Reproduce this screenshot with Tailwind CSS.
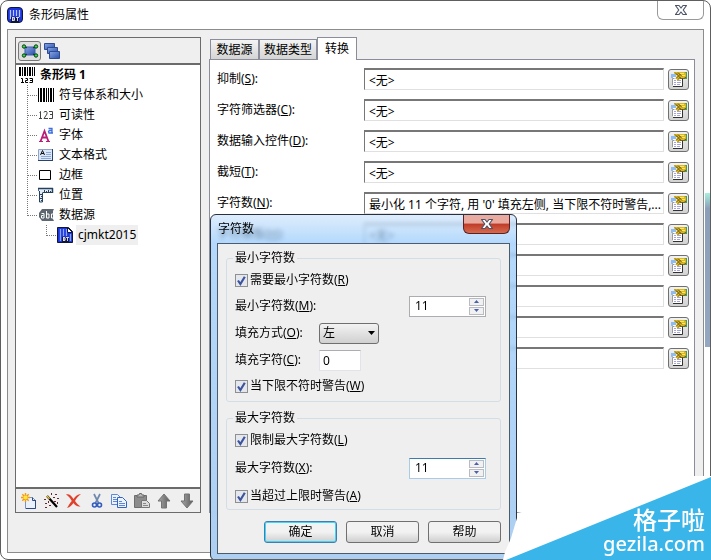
<!DOCTYPE html>
<html lang="zh-CN">
  <head>
    <meta charset="UTF-8" />
    <meta name="viewport" content="width=device-width, initial-scale=1.0" />
    <title>条形码属性</title>
    <script src="https://cdn.jsdelivr.net/npm/@tailwindcss/browser@4"></script>
  </head>
  <body class="bg-white text-black text-xs font-['Noto_Sans','Noto_Sans_CJK_SC',sans-serif]">
    <!-- Shared icons -->
    <svg class="absolute size-0" aria-hidden="true">
      <defs>
        <linearGradient id="blue" x1="0" y1="0" x2="1" y2="1">
          <stop offset="0" stop-color="#86a6e6" />
          <stop offset="1" stop-color="#2c4fa8" />
        </linearGradient>
        <linearGradient id="grey" x1="0" y1="0" x2="1" y2="0">
          <stop offset="0" stop-color="#a8a8a8" />
          <stop offset="1" stop-color="#5c5c5c" />
        </linearGradient>
      </defs>
      <symbol id="branch" viewBox="0 0 11 20">
        <path d="M.5 0V20M1 10.5H11" stroke="#777" stroke-dasharray="1 1" fill="none" />
      </symbol>
      <symbol id="branch-end" viewBox="0 0 11 20">
        <path d="M.5 0V11M1 10.5H11" stroke="#777" stroke-dasharray="1 1" fill="none" />
      </symbol>
      <symbol id="props" viewBox="0 0 16 16">
        <path d="M0 3h5v4H0z" fill="#8ebcf0" />
        <path d="M2 6h9v9H2z" fill="#fff" />
        <path d="M1.500 14V7.500h2" stroke="#999" fill="none" />
        <path d="M11.500 7v8.500H2" stroke="#333" fill="none" />
        <path d="M3 9.500h2M6 9.500h4M3 11.500h2M6 11.500h4M3 13.500h2M6 13.500h3" stroke="#a3a4d8" />
        <path d="M13 1h3v7h-3z" fill="#4c9a48" />
        <path d="M3 1h10l2 1v4l-2 1.500H9.500L7 9.500 4.500 7l2-2.500L3 2.500z" fill="#dcb824" />
        <path d="M4 1.500l6 6M7 1.500l4 4M10 2.500l-5 5M7 2.500L5.500 4M9.500 6L7 8.500M9 7.500h4l2-1.500" stroke="#5d4c12" stroke-width=".8" fill="none" />
        <path d="M9 2.500h4M11 4.500h3" stroke="#f8e868" />
      </symbol>
      <symbol id="tick" viewBox="0 0 13 13">
        <path d="M3 6.500L5.400 10 9.800 2.800" stroke="#3d539c" stroke-width="2.200" fill="none" />
      </symbol>
      <symbol id="cross" viewBox="0 0 14 12">
        <path d="M1.500 1.500h3.500L7 4l2-2.500h3.500L9.200 6l3.300 4.500H9L7 8l-2 2.500H1.500L4.800 6z" fill="#fff" stroke="#4c5468" stroke-width="1.200" stroke-linejoin="round" />
      </symbol>
      <symbol id="up" viewBox="0 0 7 4"><path d="M3.500 0L7 4H0z" fill="#4a5fae" /></symbol>
      <symbol id="down" viewBox="0 0 7 4"><path d="M0 0h7L3.500 4z" fill="#4a5fae" /></symbol>
    </svg>

    <div class="relative flex min-h-screen flex-col overflow-hidden rounded-lg border border-[#5e5e5e] px-1.5 pb-1.5">
      <!-- Title bar -->
      <header class="flex h-7 items-start">
        <h1 class="flex flex-1 items-center gap-1.5 pt-1.5">
          <svg class="size-4" viewBox="0 0 16 16">
            <rect x=".5" y=".5" width="15" height="15" rx="3.500" fill="#1c35dc" stroke="#10153c" />
            <path d="M3.500 3v9M6.500 3v6M9.500 3v6M12.500 3v7" stroke="#b9c9ff" stroke-width="1.300" />
            <path d="M4 10h8v5H4z" fill="#10153c" />
            <path d="M5.500 10v4M5.500 10.500h2v3h-2M5.500 12h2M9 10.500h3M10.500 10.500V14" stroke="#fff" stroke-width=".8" fill="none" />
          </svg>
          条形码属性
        </h1>
        <button aria-label="关闭" class="flex h-[19px] w-[47px] items-center justify-center rounded-b-md border border-t-0 border-[#999] bg-white">
          <svg class="h-3 w-3.5"><use href="#cross" /></svg>
        </button>
      </header>

      <main class="flex flex-1 gap-[7px] border border-[#8c8c8c] bg-[#efefef] pt-[7px] pr-2 pb-[39px] pl-[7px]">
        <!-- Object tree -->
        <aside class="flex w-[186px] shrink-0 flex-col border border-[#6b6b6b]">
          <div class="flex h-[27px] items-center gap-[3px] border-b-2 border-[#6b6b6b] px-0.5">
            <button aria-label="对象" class="flex h-5 w-[23px] items-center justify-center rounded-[3px] border border-[#777] bg-[#dedede]">
              <svg class="h-3.5 w-[18px]" viewBox="0 0 18 14">
                <path d="M4 3h10v8H4z" fill="url(#blue)" stroke="#3d5ca8" />
                <path d="M3 2l3 2M15 2l-3 2M3 12l3-2M15 12l-3-2" stroke="#222" />
                <g fill="#2fe04b" stroke="#0d3d14">
                  <circle cx="3" cy="2.500" r="1.700" /><circle cx="15" cy="2.500" r="1.700" />
                  <circle cx="3" cy="11.500" r="1.700" /><circle cx="15" cy="11.500" r="1.700" />
                </g>
              </svg>
            </button>
            <button aria-label="数据源列表">
              <svg class="size-4" viewBox="0 0 16 16" fill="url(#blue)" stroke="#2d4a94">
                <path d="M.5.500h10v6H.5z" /><path d="M3.500 4.500h10v6h-10z" /><path d="M5.500 8.500h10v7h-10z" />
              </svg>
            </button>
          </div>

          <div class="flex-1 bg-white pl-[3px]">
            <p class="flex h-5 items-center gap-[5px] font-bold">
              <svg class="size-4" viewBox="0 0 16 16">
                <path d="M0 0h2v9H0zM3 0h1v9H3zM5 0h2v9H5zM8 0h1v9H8zM10 0h2v9h-2zM13 0h1v9h-1zM15 0h1v9h-1z" />
                <path d="M2 11.500h1.500V15M2 15.500h3M6.500 11.500h2v2h-2v2H9M10.500 11.500h3v4h-3M11 13.500h2" stroke="#000" fill="none" />
              </svg>
              条形码 1
            </p>
            <ul class="pl-2">
              <li class="flex h-5 items-center">
                <svg class="h-5 w-[11px]"><use href="#branch" /></svg>
                <svg class="mr-[5px] size-4" viewBox="0 0 16 16"><path d="M0 1h1v14H0zM2 1h2v14H2zM5 1h2v14H5zM8 1h1v14H8zM10 1h1v14h-1zM12 1h2v14h-2zM15 1h1v14h-1z" /></svg>
                符号体系和大小
              </li>
              <li class="flex h-5 items-center">
                <svg class="h-5 w-[11px]"><use href="#branch" /></svg>
                <svg class="mr-[5px] size-4" viewBox="0 0 16 16" fill="none" stroke="#444">
                  <path d="M1.500 5.500l1-1v7M1 11.500h3M6 5.500l.5-1h2l.5 1v1.500l-3 4.500h4M11 4.500h3.500v7H11M12 7.500h2.500" />
                </svg>
                可读性
              </li>
              <li class="flex h-5 items-center">
                <svg class="h-5 w-[11px]"><use href="#branch" /></svg>
                <svg class="mr-[5px] size-4" viewBox="0 0 16 16">
                  <path d="M2.500 14.500L6.500 4l4 10.500M4 10.500h5" stroke="#b81d77" stroke-width="1.800" fill="none" />
                  <path d="M1 14.500h4M8 14.500h4" stroke="#b81d77" />
                  <path d="M10.500 1.500h3.500v4.500h1M14 3.500h-2.500l-1 1 .5 1.500h2l1-1" stroke="#3e6fe0" stroke-width="1.300" fill="none" />
                </svg>
                字体
              </li>
              <li class="flex h-5 items-center">
                <svg class="h-5 w-[11px]"><use href="#branch" /></svg>
                <svg class="mr-[5px] size-4" viewBox="0 0 16 16">
                  <path d="M.5 2.500h14v11H.5z" fill="#dce8fa" stroke="#8ea4c8" />
                  <path d="M0 13.500h15M14.500 2v12" stroke="#2d4468" />
                  <path d="M2.500 8L4.500 3.500 6.500 8M3 6.500h3" stroke="#111" fill="none" />
                  <path d="M8 5.500h5M8 7.500h5M3 9.500h10M3 11.500h10" stroke="#8fa9d6" />
                </svg>
                文本格式
              </li>
              <li class="flex h-5 items-center">
                <svg class="h-5 w-[11px]"><use href="#branch" /></svg>
                <svg class="mr-[5px] size-4" viewBox="0 0 16 16"><path d="M1.500 3.500h11v9h-11z" fill="#fff" stroke="#000" /></svg>
                边框
              </li>
              <li class="flex h-5 items-center">
                <svg class="h-5 w-[11px]"><use href="#branch" /></svg>
                <svg class="mr-[5px] size-4" viewBox="0 0 16 16">
                  <path d="M.5 1.500h14v4H5v9.500H1.500V5.500h-1z" fill="#e3ebf6" />
                  <path d="M0 1.500h15M14.500 1v5M0 1v3" stroke="#24405f" stroke-width="1.500" />
                  <path d="M4.500 5.500V15H1.500V4M5 5.500h10" stroke="#24405f" fill="none" />
                  <path d="M6.500 3v2M8.500 4v1.500M10.500 3v2M12.500 4v1.500M2 7.500h2M3 9.500h1.500M2 11.500h2M3 13.500h1" stroke="#24405f" />
                </svg>
                位置
              </li>
              <li>
                <div class="flex h-5 items-center">
                  <svg class="h-5 w-[11px]"><use href="#branch-end" /></svg>
                  <svg class="mr-[5px] size-4" viewBox="0 0 16 16">
                    <path d="M4 2h12l-1 2v8l1 2H4L1 10V6z" fill="#5e6670" />
                    <path d="M3.500 6.500h2.500v4.500H3.500V8.500h2M8.500 4v7h2.500V7H9M15 7h-1.500v4H15" stroke="#fff" fill="none" />
                  </svg>
                  数据源
                </div>
                <ul class="pl-[19px]">
                  <li class="flex h-5 items-center">
                    <svg class="h-5 w-[11px]"><use href="#branch-end" /></svg>
                    <svg class="mr-[3px] size-4" viewBox="0 0 16 16">
                      <path d="M.5.500h11l4 4v11H.5z" fill="#1c35dc" stroke="#10153c" />
                      <path d="M3.500 2v12M6.500 2v7M9.500 2v7M13.500 7v7" stroke="#8ba5ff" stroke-width="1.300" />
                      <path d="M10.500.500v5h5z" fill="#fff" stroke="#10153c" />
                      <path d="M5 10h7v5H5z" fill="#10153c" />
                      <path d="M6.500 10v4M6.500 10.500h1.500v3H6.500M6.500 12h2M9 10.500h3M10.500 10.500V14" stroke="#fff" stroke-width=".8" fill="none" />
                    </svg>
                    <a href="#" class="flex h-5 items-center bg-[#efefef] px-0.5">cjmkt2015</a>
                  </li>
                </ul>
              </li>
            </ul>
          </div>

          <div class="flex h-[25px] items-center border-t-2 border-[#6b6b6b] px-0.5">
            <button aria-label="新建" class="flex w-[23px] justify-center">
              <svg class="size-4" viewBox="0 0 16 16">
                <path d="M4.500 4.500h7l3 3v8h-10z" fill="#e9f1fc" stroke="#7d94b8" />
                <path d="M14.500 7v8.500H5M11.500 4.500v3h3" stroke="#2b4c7c" fill="none" />
                <path d="M4.500 0v9M0 4.500h9M1.300 1.300l6.400 6.400M7.700 1.300L1.300 7.700" stroke="#f29a0c" stroke-width="1.400" />
                <circle cx="4.500" cy="4.500" r="2" fill="#ffe53a" />
              </svg>
            </button>
            <button aria-label="向导" class="flex w-[23px] justify-center">
              <svg class="size-4" viewBox="0 0 16 16">
                <path d="M3 3l10 11" stroke="#000" stroke-width="2.200" />
                <path d="M3 3l2.500 2.700" stroke="#e8c832" stroke-width="1.500" />
                <path d="M7 0h1v2H7zM11 1h2v1h-2zM9 4h2v1H9zM13 5h2v1h-2zM10 8h2v1h-2zM0 6h2v1H0zM1 10h2v1H1zM4 8h1v2H4zM5 12h2v1H5zM1 14h2v1H1zM13 9h1v2h-1z" fill="#6b2733" />
              </svg>
            </button>
            <button aria-label="删除" class="flex w-[23px] justify-center">
              <svg class="size-4" viewBox="0 0 16 16">
                <path d="M0 1.500c3-1 5 .5 7.500 4.500 2-3 4-4.500 7.500-5-3 2.500-5 4.500-6 7 1.500 2 3 4 5.500 5.500-3 .5-5.500-1-7-3.500C6 12 4 14.500 1 15c1.500-2.500 3-5 4.800-7C4.300 5 2.500 3 0 1.500z" fill="#e0402c" />
              </svg>
            </button>
            <button aria-label="剪切" class="flex w-[23px] justify-center">
              <svg class="size-4" viewBox="0 0 16 16" fill="none">
                <path d="M5 1l4.500 9M11 1L6.500 10" stroke="#7188ae" stroke-width="1.700" />
                <circle cx="5.500" cy="12" r="2" stroke="#2f5cc0" stroke-width="1.600" />
                <circle cx="10.500" cy="12" r="2" stroke="#2f5cc0" stroke-width="1.600" />
              </svg>
            </button>
            <button aria-label="复制" class="flex w-[23px] justify-center">
              <svg class="size-4" viewBox="0 0 16 16" fill="#edf3fd" stroke="#5d87d8">
                <path d="M.5 1.500h6l3 3v7h-9z" /><path d="M2 4.500h3M2 6.500h5M2 8.500h4" />
                <path d="M6.500 4.500h5l4 4v6h-9z" stroke="#3463bd" /><path d="M8 8.500h3M8 10.500h6M8 12.500h6" />
              </svg>
            </button>
            <button aria-label="粘贴" class="flex w-[23px] justify-center">
              <svg class="size-4" viewBox="0 0 16 16">
                <path d="M.5 2.500h12v12H.5z" fill="#8c8c8c" stroke="#6e6e6e" />
                <path d="M3 4V2h2l.5-1.500h2L8 2h2v2z" fill="#bbb" stroke="#666" />
                <path d="M7.500 7.500h5l3 3v4h-8z" fill="#ddd" stroke="#777" />
                <path d="M9 10.500h3M9 12.500h5" stroke="#888" />
              </svg>
            </button>
            <button aria-label="上移" class="flex w-[23px] justify-center">
              <svg class="size-4" viewBox="0 0 16 16"><path d="M8 1l6 7h-3.500v7h-5V8H2z" fill="url(#grey)" stroke="#737373" /></svg>
            </button>
            <button aria-label="下移" class="flex w-[23px] justify-center">
              <svg class="size-4" viewBox="0 0 16 16"><path d="M8 15l6-7h-3.500V1h-5v7H2z" fill="url(#grey)" stroke="#737373" /></svg>
            </button>
          </div>
        </aside>

        <!-- Tabs -->
        <section class="flex min-w-0 flex-1 flex-col pl-px">
          <div class="flex h-[22px] items-end pl-px" role="tablist">
            <button role="tab" class="h-5 w-[49px] border border-b-0 border-[#8b8d9b] bg-linear-to-b from-[#f4f4f4] to-[#d4d4d4]">数据源</button>
            <button role="tab" class="h-5 w-[58px] border border-b-0 border-[#8b8d9b] bg-linear-to-b from-[#f4f4f4] to-[#d4d4d4]">数据类型</button>
            <button role="tab" aria-selected="true" class="z-10 -mb-px h-[23px] w-10 border border-b-0 border-[#8b8d9b] bg-white">转换</button>
          </div>
          <div class="flex flex-1 flex-col gap-[9px] border border-[#8b8d9b] bg-white pt-2 pr-[5px] pl-[7px]" id="transforms"></div>
        </section>
      </main>

      <div class="absolute top-48 right-0 h-[154px] w-[5px] bg-linear-to-b from-[#a8f0dc] via-[#8ba0b8] via-10% to-[#93a8c0]"></div>

      <!-- Character count dialog -->
      <div role="dialog" aria-labelledby="dialogTitle" class="absolute top-[213px] left-[209px] w-[307px] rounded-md border border-[#28323f] bg-linear-to-b from-[#cfe4fa]/70 via-[#94c8fb]/70 via-8% to-[#a8cdf2]/95 px-1.5 pb-1.5 backdrop-blur-[2px]">
        <div class="flex h-7 items-start">
          <h2 id="dialogTitle" class="flex-1 pt-1.5 pl-px">字符数</h2>
          <button aria-label="关闭" class="flex h-[19px] w-[47px] items-center justify-center rounded-b-md border border-t-0 border-[#5b2222] bg-linear-to-b from-[#e9aaa0] from-45% via-[#c03a26] via-50% to-[#d56a50]">
            <svg class="h-3 w-3.5"><use href="#cross" /></svg>
          </button>
        </div>
        <form class="border border-[#4d5c6c] bg-[#efefef] pt-1.5 pr-2 pb-2.5 pl-2">
          <fieldset class="rounded-[3px] border border-[#d3dde6] px-2 pb-[5px]">
            <legend class="-mx-0.5 px-0.5">最小字符数</legend>
            <div class="flex flex-col gap-[5px] pt-1">
              <div class="flex h-5 items-center gap-0.5">
                <span class="grid size-[13px]">
                  <input id="needMin" type="checkbox" checked class="peer col-start-1 row-start-1 size-[13px] appearance-none border border-[#8e8f8f] bg-[#e4e8ee]" />
                  <svg class="pointer-events-none invisible col-start-1 row-start-1 size-[13px] peer-checked:visible"><use href="#tick" /></svg>
                </span>
                <label for="needMin">需要最小字符数(<u>R</u>)</label>
              </div>
              <div class="flex h-[22px] items-center">
                <label for="minCount">最小字符数(<u>M</u>):</label>
                <div class="mr-1.5 ml-auto flex h-[21px] w-[77px] border border-[#abadb3] bg-white">
                  <input id="minCount" type="text" value="11" class="min-w-0 flex-1 pl-[5px] outline-none" />
                  <div class="flex w-[17px] flex-col gap-px bg-white p-px">
                    <button type="button" aria-label="增加" class="flex flex-1 items-center justify-center border border-[#b9bac2] bg-[#f1f1f1]"><svg class="h-[3px] w-[5px]"><use href="#up" /></svg></button>
                    <button type="button" aria-label="减少" class="flex flex-1 items-center justify-center border border-[#b9bac2] bg-[#f1f1f1]"><svg class="h-[3px] w-[5px]"><use href="#down" /></svg></button>
                  </div>
                </div>
              </div>
              <div class="flex h-[22px] items-center">
                <label for="fillMode" class="w-[84px]">填充方式(<u>O</u>):</label>
                <div class="grid">
                  <select id="fillMode" class="col-start-1 row-start-1 h-[21px] w-[60px] appearance-none rounded-[3px] border border-[#6f6f6f] bg-linear-to-b from-[#f3f3f3] to-[#d0d0d0] pl-[3px]">
                    <option>左</option>
                    <option>右</option>
                  </select>
                  <svg class="pointer-events-none col-start-1 row-start-1 mr-1 h-1 w-[7px] self-center justify-self-end" viewBox="0 0 7 4"><path d="M0 0h7L3.500 4z" /></svg>
                </div>
              </div>
              <div class="flex h-[22px] items-center">
                <label for="fillChar" class="w-[84px]">填充字符(<u>C</u>):</label>
                <input id="fillChar" type="text" value="0" class="h-[21px] w-[42px] border border-[#e2e3ea] border-t-[#abadb3] bg-white pl-[3px]" />
              </div>
              <div class="flex h-5 items-center gap-0.5">
                <span class="grid size-[13px]">
                  <input id="warnMin" type="checkbox" checked class="peer col-start-1 row-start-1 size-[13px] appearance-none border border-[#8e8f8f] bg-[#e4e8ee]" />
                  <svg class="pointer-events-none invisible col-start-1 row-start-1 size-[13px] peer-checked:visible"><use href="#tick" /></svg>
                </span>
                <label for="warnMin">当下限不符时警告(<u>W</u>)</label>
              </div>
            </div>
          </fieldset>

          <fieldset class="mt-2 rounded-[3px] border border-[#d3dde6] px-2 pb-[3px]">
            <legend class="-mx-0.5 px-0.5">最大字符数</legend>
            <div class="flex flex-col gap-[7px] pt-1">
              <div class="flex h-5 items-center gap-0.5">
                <span class="grid size-[13px]">
                  <input id="limitMax" type="checkbox" checked class="peer col-start-1 row-start-1 size-[13px] appearance-none border border-[#8e8f8f] bg-[#e4e8ee]" />
                  <svg class="pointer-events-none invisible col-start-1 row-start-1 size-[13px] peer-checked:visible"><use href="#tick" /></svg>
                </span>
                <label for="limitMax">限制最大字符数(<u>L</u>)</label>
              </div>
              <div class="flex h-[22px] items-center">
                <label for="maxCount">最大字符数(<u>X</u>):</label>
                <div class="mr-1.5 ml-auto flex h-[21px] w-[77px] border border-[#a9cbe6] border-t-[#3d7bad] bg-white">
                  <input id="maxCount" type="text" value="11" class="min-w-0 flex-1 pl-[5px] outline-none" />
                  <div class="flex w-[17px] flex-col gap-px bg-white p-px">
                    <button type="button" aria-label="增加" class="flex flex-1 items-center justify-center border border-[#b9bac2] bg-[#f1f1f1]"><svg class="h-[3px] w-[5px]"><use href="#up" /></svg></button>
                    <button type="button" aria-label="减少" class="flex flex-1 items-center justify-center border border-[#b9bac2] bg-[#f1f1f1]"><svg class="h-[3px] w-[5px]"><use href="#down" /></svg></button>
                  </div>
                </div>
              </div>
              <div class="flex h-5 items-center gap-0.5">
                <span class="grid size-[13px]">
                  <input id="warnMax" type="checkbox" checked class="peer col-start-1 row-start-1 size-[13px] appearance-none border border-[#8e8f8f] bg-[#e4e8ee]" />
                  <svg class="pointer-events-none invisible col-start-1 row-start-1 size-[13px] peer-checked:visible"><use href="#tick" /></svg>
                </span>
                <label for="warnMax">当超过上限时警告(<u>A</u>)</label>
              </div>
            </div>
          </fieldset>

          <div class="mt-[11px] flex justify-end gap-[9px]">
            <button type="submit" class="h-[22px] w-[73px] rounded-[3px] border border-[#3c7fb1] bg-linear-to-b from-[#f2f2f2] from-50% to-[#cfcfcf] inset-ring inset-ring-[#46d3f5]">确定</button>
            <button type="button" class="h-[22px] w-[73px] rounded-[3px] border border-[#707070] bg-linear-to-b from-[#f2f2f2] from-50% to-[#cfcfcf]">取消</button>
            <button type="button" class="h-[22px] w-[73px] rounded-[3px] border border-[#707070] bg-linear-to-b from-[#f2f2f2] from-50% to-[#cfcfcf]">帮助</button>
          </div>
        </form>
      </div>
    </div>

    <!-- Site badge in the corner -->
    <div class="absolute right-0 bottom-0 grid h-[84px] w-[208px] text-white">
      <svg class="col-start-1 row-start-1 overflow-visible" width="208" height="84" viewBox="0 0 208 84">
        <path d="M14 37L187 0h21v84H0l2-8 6-14 6-20z" fill="#fff" />
        <path d="M3 84L208 1v83z" fill="#39b5ea" />
      </svg>
      <div class="z-10 col-start-1 row-start-1 flex flex-col items-end self-end pr-1.5 pb-1.5">
        <span class="text-2xl leading-7 font-medium">格子啦</span>
        <span class="text-xl leading-5 font-medium">gezila.com</span>
      </div>
    </div>

    <script>
      const transforms = [
        { name: "抑制", key: "S", value: "<无>" },
        { name: "字符筛选器", key: "C", value: "<无>" },
        { name: "数据输入控件", key: "D", value: "<无>" },
        { name: "截短", key: "T", value: "<无>" },
        { name: "字符数", key: "N", value: "最小化 11 个字符, 用 '0' 填充左侧, 当下限不符时警告,..." },
        { name: "字符模板", key: "H", value: "<无>" },
        { name: "", key: "E", value: "" },
        { name: "", key: "R", value: "" },
        { name: "", key: "P", value: "" },
        { name: "", key: "V", value: "" },
      ];

      document.getElementById("transforms").innerHTML = transforms
        .map(
          (item) => `
        <div class="flex h-[22px] items-center">
          <label for="field${item.key}" class="w-[147px] shrink-0">${
            item.name ? `${item.name}(<u>${item.key}</u>):` : ""
          }</label>
          <input id="field${item.key}" type="text" readonly value="${item.value}"
            class="h-[22px] min-w-0 flex-1 border border-t-2 border-[#e0e0e0] border-t-[#777] border-l-[#777] bg-white pl-1" />
          <button aria-label="设置" class="ml-1 flex h-[21px] w-[21px] items-center justify-center rounded-[3px] border border-[#707070] bg-linear-to-b from-[#f2f2f2] to-[#d2d2d2]">
            <svg class="size-4"><use href="#props" /></svg>
          </button>
        </div>`
        )
        .join("");
    </script>
  </body>
</html>
